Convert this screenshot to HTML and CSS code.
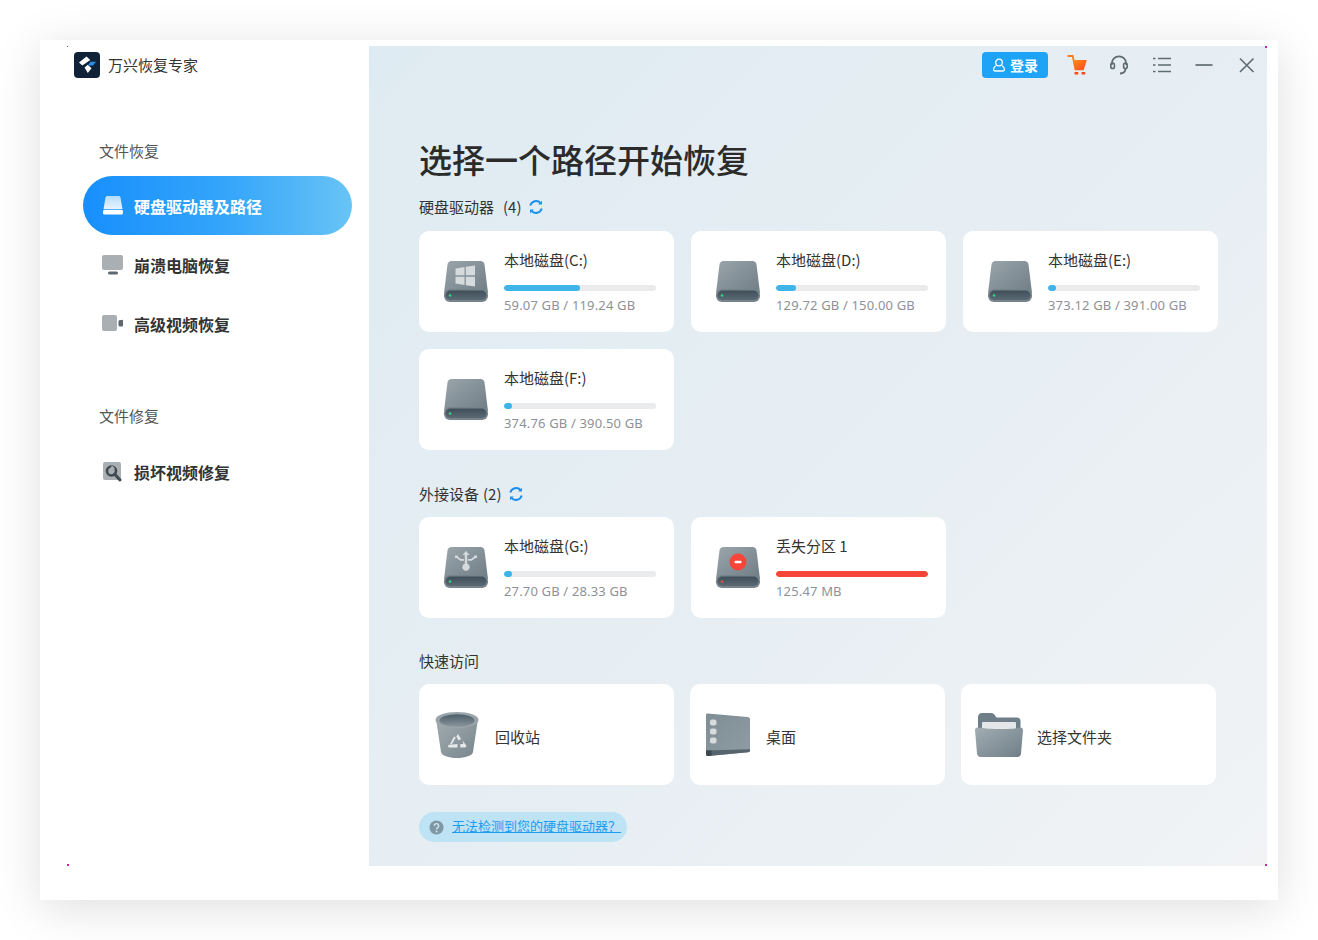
FILE: index.html
```html
<!DOCTYPE html>
<html lang="zh-CN">
<head>
<meta charset="utf-8">
<title>万兴恢复专家</title>
<link rel="stylesheet" href="styles.css">
</head>
<body>
<svg class="defs" width="0" height="0" aria-hidden="true">
  <defs>
    <linearGradient id="gDisk" x1="0" y1="0" x2="1" y2="1"><stop offset="0" stop-color="#9aa5ab"/><stop offset="1" stop-color="#6f7d85"/></linearGradient>
    <linearGradient id="gBase" x1="0" y1="0" x2="0" y2="1"><stop offset="0" stop-color="#3f4f5a"/><stop offset="1" stop-color="#5b6973"/></linearGradient>
    <linearGradient id="gBin" x1="0" y1="0" x2="1" y2="1"><stop offset="0" stop-color="#a3adb2"/><stop offset="1" stop-color="#77858c"/></linearGradient>
    <linearGradient id="gBinIn" x1="0" y1="0" x2="0" y2="1"><stop offset="0" stop-color="#4c5d68"/><stop offset="1" stop-color="#8a969c"/></linearGradient>
    <linearGradient id="gDesk" x1="0" y1="0" x2="1" y2="1"><stop offset="0" stop-color="#7f8d95"/><stop offset="1" stop-color="#8f9ca3"/></linearGradient>
    <linearGradient id="gFold" x1="0" y1="0" x2="1" y2="1"><stop offset="0" stop-color="#a2adb3"/><stop offset="1" stop-color="#6f7e86"/></linearGradient>
    <linearGradient id="gNav" x1="0" y1="0" x2="0" y2="1"><stop offset="0" stop-color="#b6dcfb"/><stop offset="1" stop-color="#e6f4ff"/></linearGradient>
    <linearGradient id="gCart" x1="0" y1="0" x2="1" y2="1"><stop offset="0" stop-color="#ff8a1e"/><stop offset="1" stop-color="#ff4a17"/></linearGradient>
    <symbol id="disk" viewBox="0 0 44 41">
      <path d="M3.500 3.500C3.800 1.400 5.400 0 7.500 0h29c2.100 0 3.700 1.400 4 3.500L44 32H0z" fill="url(#gDisk)"/>
      <rect x="0" y="28" width="44" height="13" rx="6" fill="#76838b"/>
      <rect x="1.500" y="29.500" width="41" height="9.500" rx="4.700" fill="url(#gBase)"/>
    </symbol>
    <symbol id="refresh" viewBox="0 0 16 16">
      <path d="M2.300 6.500A6 6 0 0 1 12.600 4.100M13.700 9.500A6 6 0 0 1 3.400 11.900" fill="none" stroke="#1d8ff0" stroke-width="2"/>
      <path d="M14 1.700v3.800h-3.800zM2 14.300v-3.800h3.800z" fill="#1d8ff0"/>
    </symbol>
  </defs>
</svg>

<div class="window">
  <span class="speck speck-tl"></span><span class="speck speck-tr"></span>
  <span class="speck speck-bl"></span><span class="speck speck-br"></span>
  <div class="app">
    <aside class="sidebar">
      <div class="brand">
        <svg class="brand-logo" viewBox="0 0 26 26">
          <rect width="26" height="26" rx="4" fill="#0f2238"/>
          <path d="M12.500 4.500l3.800 3.600-8 5.400-3.300-3z" fill="#fff"/>
          <path d="M10.500 15.500l3.300-2.800 3.700 3.500-3.700 4.800z" fill="#fff"/>
          <path d="M16.500 9.800h5.500l-3 3.700h-5.200z" fill="#2a8fe8"/>
        </svg>
        <span>万兴恢复专家</span>
      </div>
      <div class="side-group">文件恢复</div>
      <nav class="nav">
        <div class="nav-item active">
          <svg class="nav-icon" viewBox="0 0 22 20">
            <path d="M3.500 1.500C3.700.6 4.300 0 5.200 0h11.600c.9 0 1.500.6 1.700 1.500L20.500 13h-19z" fill="url(#gNav)"/>
            <rect x="1" y="13.800" width="20" height="4.700" rx="1.500" fill="#fff"/>
          </svg>
          <span>硬盘驱动器及路径</span>
        </div>
        <div class="nav-item">
          <svg class="nav-icon" viewBox="0 0 22 20">
            <rect x="0" y="0" width="21" height="15" rx="2" fill="#a9afb2"/>
            <rect x="6" y="16.500" width="10" height="3" rx="1.500" fill="#5e686e"/>
          </svg>
          <span>崩溃电脑恢复</span>
        </div>
        <div class="nav-item">
          <svg class="nav-icon" viewBox="0 0 22 20">
            <rect x="0" y="1" width="15" height="16" rx="2" fill="#a9afb2"/>
            <path d="M16.500 9l4.500-3.500v7z" fill="#5e686e"/>
            <rect x="16.500" y="6" width="4.500" height="6.500" rx="1.500" fill="#5e686e"/>
          </svg>
          <span>高级视频恢复</span>
        </div>
      </nav>
      <div class="side-group side-group-repair">文件修复</div>
      <nav class="nav">
        <div class="nav-item">
          <svg class="nav-icon" viewBox="0 0 22 20">
            <rect x="1" y="0" width="18" height="18" rx="2" fill="#a9afb2"/>
            <circle cx="9.500" cy="9" r="4.500" fill="none" stroke="#3f4a50" stroke-width="2.600"/>
            <path d="M12.500 12l5.500 6" stroke="#3f4a50" stroke-width="3" stroke-linecap="round"/>
            <path d="M10 3.500l3 3-3 2-2-2z" fill="#a9afb2"/>
          </svg>
          <span>损坏视频修复</span>
        </div>
      </nav>
    </aside>

    <main class="main">
      <header class="topbar">
        <button class="login">
          <svg class="login-icon" viewBox="0 0 14 14"><circle cx="7" cy="4.500" r="3.300" fill="none" stroke="#fff" stroke-width="1.300"/><path d="M3.800 7.800C2.300 9 1.500 10.300 1.500 11.500c0 1 .6 1.500 1.500 1.500h8c.9 0 1.500-.5 1.500-1.500 0-1.200-.8-2.500-2.300-3.700" fill="none" stroke="#fff" stroke-width="1.300"/></svg>
          <span>登录</span>
        </button>
        <svg class="tool" viewBox="0 0 22 22">
          <path d="M1.500 2h5.200L9.600 16" fill="none" stroke="#ff7a1a" stroke-width="1.800"/>
          <path d="M7 6h13.800l-3.200 10.300H9.200z" fill="url(#gCart)"/>
          <rect x="8.500" y="18" width="3.800" height="2.500" rx=".6" fill="#ff4a17"/>
          <rect x="15.500" y="18" width="3.800" height="2.500" rx=".6" fill="#ff4a17"/>
        </svg>
        <svg class="tool" viewBox="0 0 22 22">
          <path d="M3.800 11V9.500a7.200 7.200 0 0 1 14.400 0V11M17.500 14.500c0 3-2 4.800-5.500 5" fill="none" stroke="#5f6b72" stroke-width="1.800"/>
          <rect x="2.800" y="9" width="3.600" height="5.500" rx="1.800" fill="none" stroke="#5f6b72" stroke-width="1.600"/>
          <rect x="15.600" y="9" width="3.600" height="5.500" rx="1.800" fill="none" stroke="#5f6b72" stroke-width="1.600"/>
        </svg>
        <svg class="tool" viewBox="0 0 22 22">
          <path d="M7 4.500h13M7 11h13M7 17.500h13" stroke="#5f6b72" stroke-width="1.500"/>
          <path d="M2 4.500h2.500M2 11h2.500M2 17.500h2.500" stroke="#5f6b72" stroke-width="1.500"/>
        </svg>
        <svg class="tool" viewBox="0 0 22 22"><path d="M2.500 11h17" stroke="#5f6b72" stroke-width="1.700"/></svg>
        <svg class="tool" viewBox="0 0 22 22"><path d="M4 4.500l13.500 13.500M17.500 4.500L4 18" stroke="#5f6b72" stroke-width="1.600"/></svg>
      </header>

      <h1 class="title">选择一个路径开始恢复</h1>

      <div class="sec-head sec-head-first">
        <span>硬盘驱动器</span><span class="count">(4)</span>
        <svg class="refresh"><use href="#refresh"/></svg>
      </div>
      <section class="grid">
        <article class="card">
          <svg class="disk" viewBox="0 0 44 41">
            <use href="#disk" width="44" height="41"/>
            <path d="M11.500 7.500L20.500 6v8.300h-9zM21.800 5.800L31 4.500v9.800h-9.200zM11.500 15.700h9V24l-9-1.500zM21.800 15.700H31V25.500L21.800 24.200z" fill="#d5dadd"/>
            <circle cx="6" cy="34.500" r="1.300" fill="#2dd68a"/>
          </svg>
          <div class="info">
            <div class="name">本地磁盘(C:)</div>
            <div class="track"><div class="fill" style="width:50%"></div></div>
            <div class="size">59.07 GB / 119.24 GB</div>
          </div>
        </article>
        <article class="card">
          <svg class="disk" viewBox="0 0 44 41"><use href="#disk" width="44" height="41"/><circle cx="6" cy="34.500" r="1.300" fill="#2dd68a"/></svg>
          <div class="info">
            <div class="name">本地磁盘(D:)</div>
            <div class="track"><div class="fill" style="width:13%"></div></div>
            <div class="size">129.72 GB / 150.00 GB</div>
          </div>
        </article>
        <article class="card">
          <svg class="disk" viewBox="0 0 44 41"><use href="#disk" width="44" height="41"/><circle cx="6" cy="34.500" r="1.300" fill="#2dd68a"/></svg>
          <div class="info">
            <div class="name">本地磁盘(E:)</div>
            <div class="track"><div class="fill" style="width:5%"></div></div>
            <div class="size">373.12 GB / 391.00 GB</div>
          </div>
        </article>
        <article class="card">
          <svg class="disk" viewBox="0 0 44 41"><use href="#disk" width="44" height="41"/><circle cx="6" cy="34.500" r="1.300" fill="#2dd68a"/></svg>
          <div class="info">
            <div class="name">本地磁盘(F:)</div>
            <div class="track"><div class="fill" style="width:5%"></div></div>
            <div class="size">374.76 GB / 390.50 GB</div>
          </div>
        </article>
      </section>

      <div class="sec-head sec-head-ext">
        <span>外接设备</span><span class="count count-tight">(2)</span>
        <svg class="refresh"><use href="#refresh"/></svg>
      </div>
      <section class="grid">
        <article class="card">
          <svg class="disk" viewBox="0 0 44 41">
            <use href="#disk" width="44" height="41"/>
            <path d="M22 4l3.500 4h-2.300v8.500a3.700 3.700 0 1 1-2.400 0V8h-2.300z" fill="#d5dadd"/>
            <path d="M11 8.500h3v1.200l3 2.300h3v1.800h-3.600L12.600 11H11zM33 8.500h-3v1.200l-3 2.300h-3v1.800h3.600l3.800-2.800H33z" fill="#d5dadd"/>
            <circle cx="6" cy="34.500" r="1.300" fill="#2dd68a"/>
          </svg>
          <div class="info">
            <div class="name">本地磁盘(G:)</div>
            <div class="track"><div class="fill" style="width:5%"></div></div>
            <div class="size">27.70 GB / 28.33 GB</div>
          </div>
        </article>
        <article class="card">
          <svg class="disk" viewBox="0 0 44 41">
            <use href="#disk" width="44" height="41"/>
            <circle cx="22" cy="15" r="8.500" fill="#f8453a"/>
            <rect x="18.500" y="13.800" width="7" height="2.400" rx="1" fill="#fff"/>
            <circle cx="6" cy="34.500" r="1.300" fill="#f04a40"/>
          </svg>
          <div class="info">
            <div class="name">丢失分区 1</div>
            <div class="track"><div class="fill fill-lost" style="width:100%"></div></div>
            <div class="size">125.47 MB</div>
          </div>
        </article>
      </section>

      <div class="sec-head sec-head-quick"><span>快速访问</span></div>
      <section class="quick">
        <article class="qcard">
          <div class="qicon">
            <svg viewBox="0 0 44 46" class="qsvg">
              <path d="M1 7l5 33c.4 3.500 8 6 16 6s15.600-2.500 16-6l5-33z" fill="url(#gBin)"/>
              <ellipse cx="22" cy="8" rx="21.500" ry="8" fill="#9aa5ab"/>
              <ellipse cx="22" cy="8.500" rx="17.500" ry="6.300" fill="url(#gBinIn)"/>
              <path d="M23 22l3 5-2.400 1.400-2.300-4zM19 24.500l1.800 1-4 6.800h-1.800zM27.500 28.500l4 5.500-1.200 1.500h-5v-3.500h3zM22.500 32v3.500h-9l-.5-2.500z" fill="#e6e9ea"/>
            </svg>
          </div>
          <span class="qlabel">回收站</span>
        </article>
        <article class="qcard">
          <div class="qicon">
            <svg viewBox="0 0 46 44" class="qsvg">
              <path d="M1 2c0-1 .6-1.700 1.600-1.600L42.500 4c1.500.2 2.500 1 2.500 2.500V37.500c0 1-.8 1.600-2 1.700L3 43c-1.200 0-2-.8-2-2z" fill="url(#gDesk)"/>
              <path d="M1 37.500l44-1.200v1.200c0 1-.8 1.600-2 1.700L3 43c-1.200 0-2-.8-2-2z" fill="#56646d"/>
              <path d="M1 37.500h5.500v5.200L3 43c-1.200 0-2-.8-2-2z" fill="#3a4852"/>
              <rect x="5" y="6.500" width="6.500" height="6" rx="2" fill="#d7dbdd"/>
              <rect x="5" y="15.500" width="6.500" height="6" rx="2" fill="#d7dbdd"/>
              <rect x="5" y="24.500" width="6.500" height="6" rx="2" fill="#d7dbdd"/>
            </svg>
          </div>
          <span class="qlabel">桌面</span>
        </article>
        <article class="qcard">
          <div class="qicon">
            <svg viewBox="0 0 48 44" class="qsvg qsvg-wide">
              <path d="M3 4c0-2.200 1.500-4 4-4h9c1.700 0 2.800.7 3.800 2l1.600 2.500H42c2 0 3.500 1.500 3.500 3.500v10H3z" fill="#6e7f89"/>
              <rect x="7" y="9" width="34" height="12" rx="1" fill="#e4e8ea"/>
              <path d="M0 17c0-1.500 1.300-2.600 2.800-2.400C9 15.500 13 16 24 16s15-.5 21.200-1.400c1.500-.2 2.800.9 2.800 2.400l-2 23.500c-.2 2-1.500 3.500-3.500 3.500h-37c-2 0-3.300-1.500-3.500-3.500z" fill="url(#gFold)"/>
            </svg>
          </div>
          <span class="qlabel">选择文件夹</span>
        </article>
      </section>

      <a class="help" href="#">
        <svg class="help-icon" viewBox="0 0 16 16"><circle cx="8" cy="8" r="7.500" fill="#7f98a6"/><path d="M5.700 6.200a2.300 2.300 0 1 1 3.600 1.900c-.8.500-1.300 1-1.300 1.900" fill="none" stroke="#d4e6ee" stroke-width="1.500"/><circle cx="8" cy="12.200" r="1" fill="#d4e6ee"/></svg>
        <span class="help-text">无法检测到您的硬盘驱动器？</span>
      </a>
    </main>
  </div>
</div>
</body>
</html>
```

FILE: styles.css
```css
* { box-sizing: border-box; }
html, body { margin: 0; height: 940px; background: #fff; overflow: hidden; }
body {
  padding: 40px;
  font-family: "Noto Sans CJK SC", "Noto Sans", sans-serif;
  color: #333;
}
.defs { position: absolute; }
.window {
  position: relative;
  width: 1238px;
  height: 860px;
  padding: 6px 11px 34px 27px;
  background: #fff;
  box-shadow: 0 8px 44px rgba(0, 0, 0, .13);
}
.speck { position: absolute; width: 2px; height: 2px; background: #d81ea0; }
.speck-tl { left: 27px; top: 6px; width: 1px; height: 1px; background: #8a3fd0; }
.speck-tr { right: 11px; top: 6px; }
.speck-bl { left: 27px; bottom: 34px; }
.speck-br { right: 11px; bottom: 34px; }
.app { display: flex; height: 820px; }

/* sidebar */
.sidebar { width: 302px; flex: none; background: #fff; padding: 6px 0 0 7px; }
.brand { display: flex; align-items: center; gap: 8px; height: 26px; font-size: 15px; line-height: 26px; color: #333; }
.brand-logo { width: 26px; height: 26px; flex: none; }
.side-group { margin: 61px 0 0 25px; height: 24px; font-size: 15px; line-height: 24px; color: #555; }
.side-group-repair { margin-top: 51px; }
.nav { margin: 13px 0 0 9px; width: 269px; }
.side-group-repair + .nav { margin-top: 14px; }
.nav-item {
  display: flex;
  align-items: center;
  height: 59px;
  padding-left: 19px;
  border-radius: 30px;
  font-size: 16px;
  font-weight: 700;
  color: #333;
}
.nav-item.active {
  color: #fff;
  background: linear-gradient(90deg, #178ffc 0%, #36a6fb 55%, #68c4f4 100%);
}
.nav-icon { width: 22px; height: 20px; margin-right: 10px; flex: none; }

/* main */
.main {
  width: 898px;
  flex: none;
  padding: 6px 0 0 50px;
  background: linear-gradient(135deg, #dfebf2 0%, #e6eef3 50%, #f1f3f5 100%);
}
.topbar { display: flex; align-items: center; justify-content: flex-end; height: 26px; padding-right: 9.500px; }
.login {
  display: flex;
  align-items: center;
  justify-content: center;
  gap: 4px;
  width: 66px;
  height: 26px;
  margin-right: -3px;
  padding: 0;
  border: 0;
  border-radius: 4px;
  background: #1ea3f7;
  color: #fff;
  font: 700 14px/26px "Noto Sans CJK SC", sans-serif;
}
.login-icon { width: 14px; height: 14px; }
.tool { width: 22px; height: 22px; margin-left: 20.500px; flex: none; }
.title { margin: 59px 0 0; height: 44px; font-size: 33px; line-height: 44px; font-weight: 500; color: #2b2b2b; }
.sec-head { display: flex; align-items: center; height: 24px; font-size: 15px; line-height: 24px; color: #333; }
.sec-head-first { margin-top: 14px; margin-bottom: 12px; }
.sec-head-ext { margin-top: 32px; margin-bottom: 11px; }
.sec-head-quick { margin-top: 31px; margin-bottom: 11px; }
.count { margin-left: 9px; }
.count-tight { margin-left: 4px; }
.refresh { width: 16px; height: 16px; margin-left: 7px; }
.grid { display: grid; grid-template-columns: repeat(3, 255px); grid-auto-rows: 101px; gap: 17px; }
.card { display: flex; align-items: center; background: #fff; border-radius: 10px; padding-left: 25px; }
.disk { width: 44px; height: 41px; flex: none; margin-right: 16px; }
.info { width: 152px; }
.name { height: 22px; font-size: 15px; line-height: 22px; color: #333; white-space: nowrap; }
.track { height: 6px; margin-top: 14px; border-radius: 3px; background: #e9ebec; overflow: hidden; }
.fill { height: 100%; border-radius: 3px; background: #3fb4e8; }
.fill-lost { background: #f8453a; }
.size { height: 20px; margin-top: 4px; font-family: "Noto Sans", "Noto Sans CJK SC", sans-serif; font-size: 13px; line-height: 20px; color: #8d9296; white-space: nowrap; letter-spacing: .16px; }
.quick { display: grid; grid-template-columns: repeat(3, 255px); grid-auto-rows: 101px; gap: 16px; }
.qcard { display: flex; align-items: center; background: #fff; border-radius: 10px; font-size: 15px; color: #333; }
.qicon { width: 76px; flex: none; display: flex; justify-content: center; }
.qlabel { padding-top: 4px; }
.qsvg { width: 46px; height: 46px; }
.qsvg-wide { width: 48px; height: 44px; }
.help {
  display: inline-flex;
  align-items: center;
  gap: 8px;
  width: 208px;
  height: 30px;
  margin-top: 27px;
  padding-left: 10px;
  border-radius: 15px;
  background: #bde3f4;
  color: #1d9bf0;
  font-size: 13px;
  line-height: 30px;
  white-space: nowrap;
}
.help-icon { width: 15px; height: 15px; flex: none; }
.help-text { margin-top: -2px; }
```
